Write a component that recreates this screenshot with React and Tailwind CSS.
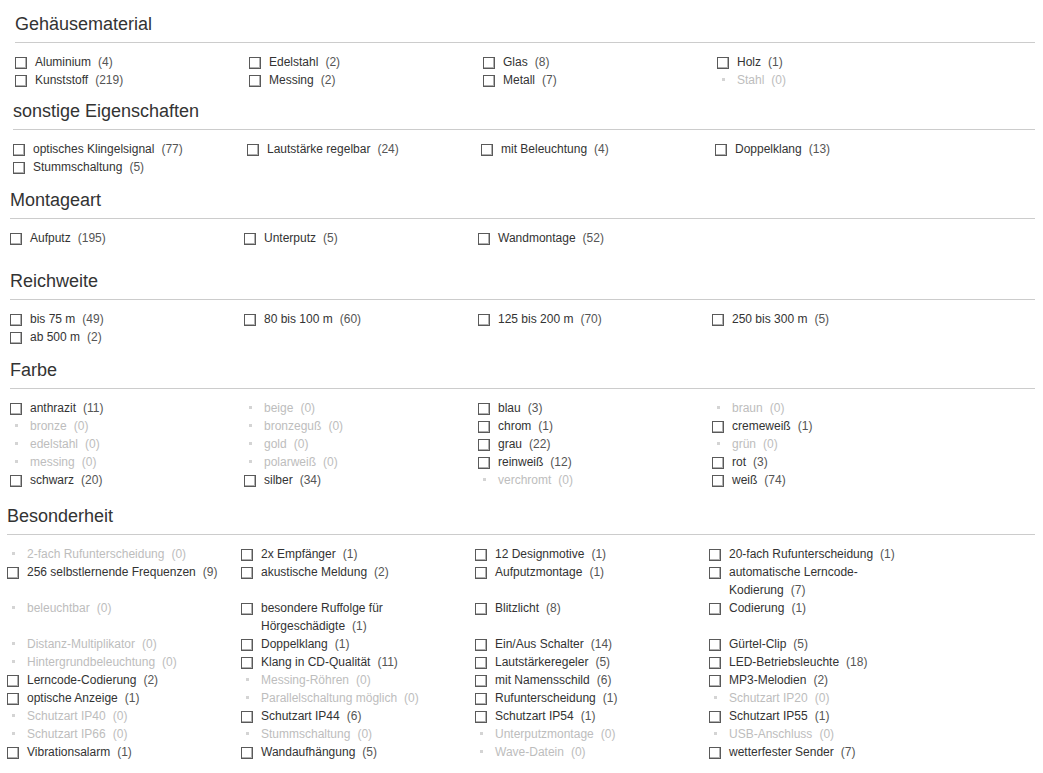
import React from "react";

const D = true;

const sections = [
  {
    title: "Gehäusematerial",
    left: "ml-[15px]",
    mt: "mt-[14px]",
    items: [
      ["Aluminium", 4], ["Edelstahl", 2], ["Glas", 8], ["Holz", 1],
      ["Kunststoff", 219], ["Messing", 2], ["Metall", 7], ["Stahl", 0, D],
    ],
  },
  {
    title: "sonstige Eigenschaften",
    left: "ml-[13px]",
    mt: "mt-[12px]",
    items: [
      ["optisches Klingelsignal", 77], ["Lautstärke regelbar", 24], ["mit Beleuchtung", 4], ["Doppelklang", 13],
      ["Stummschaltung", 5],
    ],
  },
  {
    title: "Montageart",
    left: "ml-[10px]",
    mt: "mt-[14px]",
    items: [["Aufputz", 195], ["Unterputz", 5], ["Wandmontage", 52]],
  },
  {
    title: "Reichweite",
    left: "ml-[10px]",
    mt: "mt-[24px]",
    items: [
      ["bis 75 m", 49], ["80 bis 100 m", 60], ["125 bis 200 m", 70], ["250 bis 300 m", 5],
      ["ab 500 m", 2],
    ],
  },
  {
    title: "Farbe",
    left: "ml-[10px]",
    mt: "mt-[14px]",
    items: [
      ["anthrazit", 11], ["beige", 0, D], ["blau", 3], ["braun", 0, D],
      ["bronze", 0, D], ["bronzeguß", 0, D], ["chrom", 1], ["cremeweiß", 1],
      ["edelstahl", 0, D], ["gold", 0, D], ["grau", 22], ["grün", 0, D],
      ["messing", 0, D], ["polarweiß", 0, D], ["reinweiß", 12], ["rot", 3],
      ["schwarz", 20], ["silber", 34], ["verchromt", 0, D], ["weiß", 74],
    ],
  },
  {
    title: "Besonderheit",
    left: "ml-[7px]",
    mt: "mt-[17px]",
    items: [
      ["2-fach Rufunterscheidung", 0, D], ["2x Empfänger", 1], ["12 Designmotive", 1], ["20-fach Rufunterscheidung", 1],
      ["256 selbstlernende Frequenzen", 9], ["akustische Meldung", 2], ["Aufputzmontage", 1], [["automatische Lerncode-", "Kodierung"], 7],
      ["beleuchtbar", 0, D], [["besondere Ruffolge für", "Hörgeschädigte"], 1], ["Blitzlicht", 8], ["Codierung", 1],
      ["Distanz-Multiplikator", 0, D], ["Doppelklang", 1], ["Ein/Aus Schalter", 14], ["Gürtel-Clip", 5],
      ["Hintergrundbeleuchtung", 0, D], ["Klang in CD-Qualität", 11], ["Lautstärkeregeler", 5], ["LED-Betriebsleuchte", 18],
      ["Lerncode-Codierung", 2], ["Messing-Röhren", 0, D], ["mit Namensschild", 6], ["MP3-Melodien", 2],
      ["optische Anzeige", 1], ["Parallelschaltung möglich", 0, D], ["Rufunterscheidung", 1], ["Schutzart IP20", 0, D],
      ["Schutzart IP40", 0, D], ["Schutzart IP44", 6], ["Schutzart IP54", 1], ["Schutzart IP55", 1],
      ["Schutzart IP66", 0, D], ["Stummschaltung", 0, D], ["Unterputzmontage", 0, D], ["USB-Anschluss", 0, D],
      ["Vibrationsalarm", 1], ["Wandaufhängung", 5], ["Wave-Datein", 0, D], ["wetterfester Sender", 7],
    ],
  },
];

function Item({ label, count, disabled }) {
  const lines = Array.isArray(label) ? label : [label];
  return (
    <div className="flex items-start leading-[18px] text-[12px]">
      <div className="w-[20px] h-[18px] shrink-0">
        {disabled ? (
          <div className="ml-[5px] mt-[7px] w-[3px] h-[3px] bg-[#d4d4d4]" />
        ) : (
          <div className="mt-[4px] w-[12px] h-[12px] border border-[#5a5a5a] bg-white shadow-[inset_-1px_-1px_0_#b0b0b0]" />
        )}
      </div>
      <div className={disabled ? "text-[#bdbdbd]" : "text-[#333]"}>
        {lines.map((l, i) => (
          <React.Fragment key={i}>
            {i > 0 && <br />}
            {l}
            {i === lines.length - 1 && (
              <span className={disabled ? "ml-[7px] text-[#bdbdbd]" : "ml-[7px] text-[#555]"}>({count})</span>
            )}
          </React.Fragment>
        ))}
      </div>
    </div>
  );
}

export default function App() {
  return (
    <div
      className="w-[1035px] bg-white"
      style={{ fontFamily: '"Liberation Sans", Arial, sans-serif' }}
    >
      {sections.map((s) => (
        <div key={s.title} className={`${s.left} ${s.mt}`}>
          <h2 className="text-[18px] leading-[20px] font-normal text-[#333] pb-[8px] border-b border-[#cccccc]">
            {s.title}
          </h2>
          <div className="mt-[10px] grid grid-cols-[234px_234px_234px_1fr]">
            {s.items.map(([label, count, disabled], i) => (
              <Item key={i} label={label} count={count} disabled={!!disabled} />
            ))}
          </div>
        </div>
      ))}
      <div className="h-[13px]" />
    </div>
  );
}
